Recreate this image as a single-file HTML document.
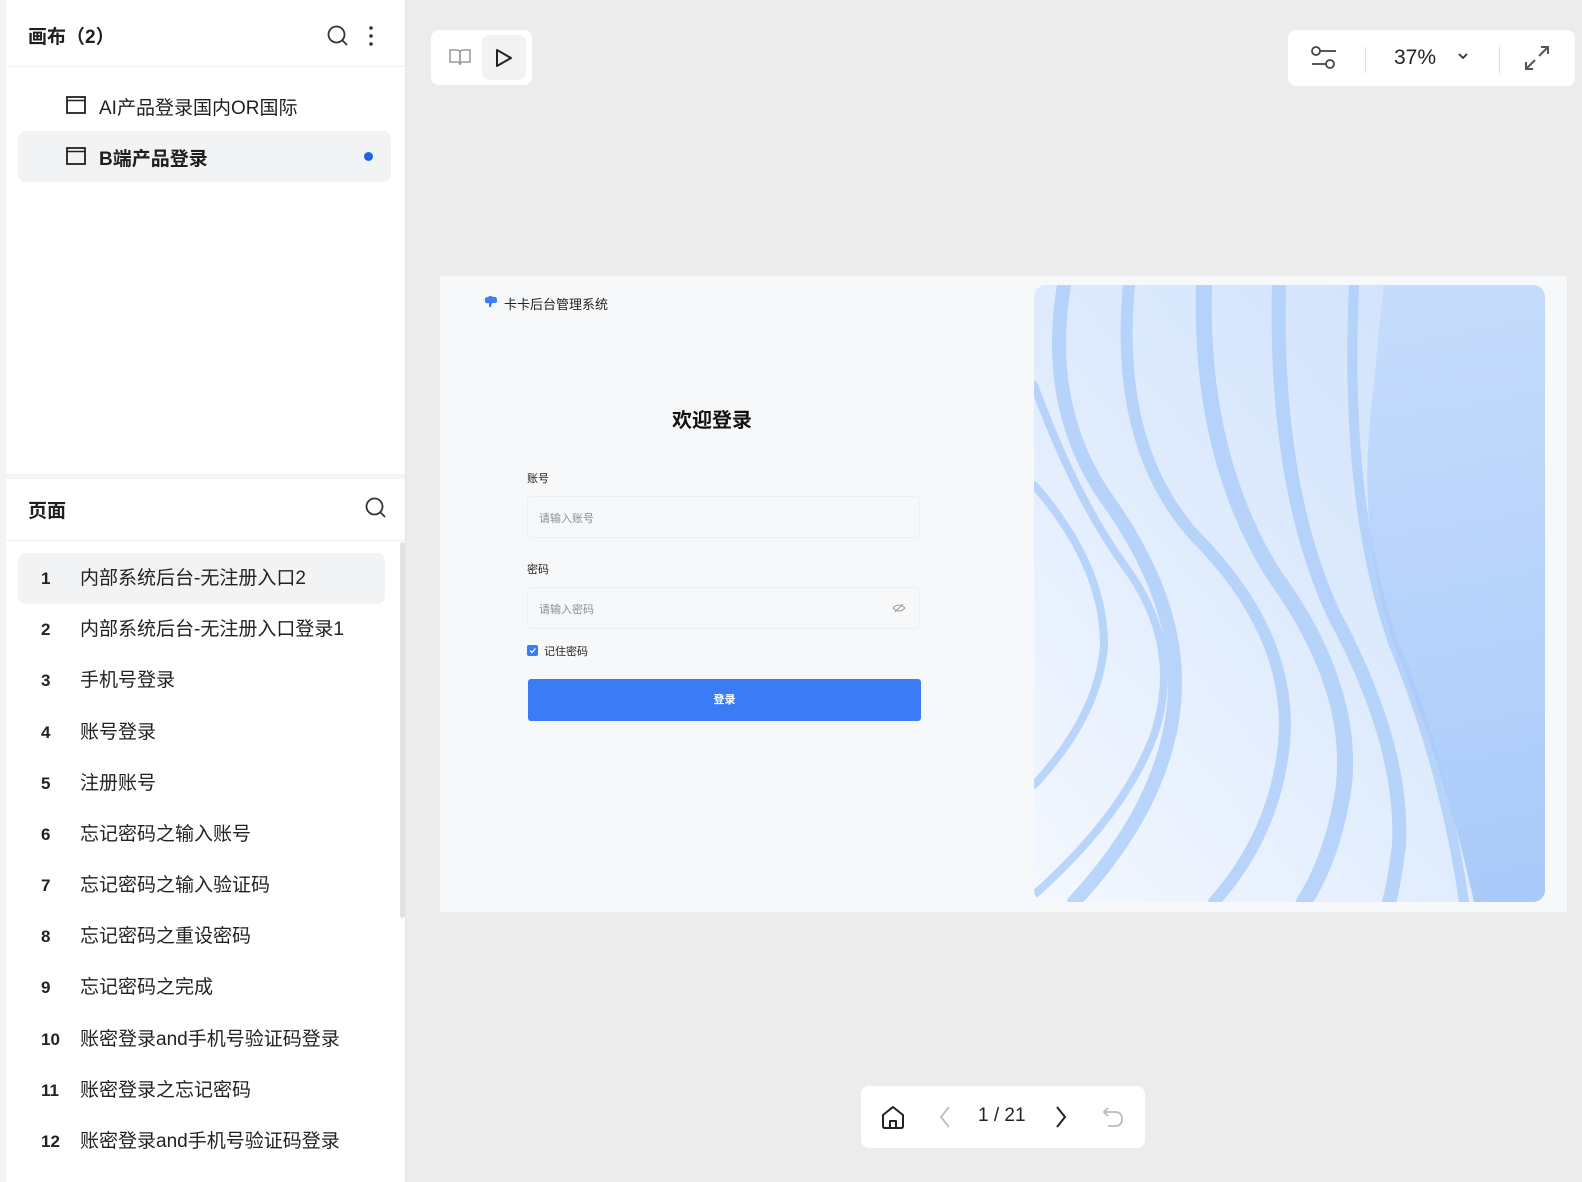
<!DOCTYPE html>
<html><head><meta charset="utf-8">
<style>
*{box-sizing:border-box;margin:0;padding:0}
body{width:1582px;height:1182px;overflow:hidden;background:#ececec;font-family:"Liberation Sans","Noto Sans CJK SC",sans-serif;color:#1f1f1f;position:relative}
.abs{position:absolute}
.side{left:0;top:0;width:406px;height:1182px;background:#fff;border-left:6px solid #f3f3f3;border-right:1px solid #e4e4e4}
.t18{font-size:19px}
.row{position:absolute;left:41px;height:51px;line-height:51px;font-size:19px;color:#222}
.row b{display:inline-block;width:39px;font-weight:bold;font-size:17px}
.card{background:#fff;border-radius:8px}
</style></head><body>
<div class="abs side">
  <div class="abs" style="left:22px;top:22px;font-size:19px;font-weight:bold">画布（2）</div>
  <svg class="abs" style="left:320px;top:24px" width="24" height="24" viewBox="0 0 24 24" fill="none" stroke="#333" stroke-width="1.8"><circle cx="10.5" cy="10.5" r="8"/><path d="M16.5 16.5L21 21"/></svg>
  <svg class="abs" style="left:360px;top:24px" width="10" height="24"><circle cx="5" cy="4" r="1.8" fill="#333"/><circle cx="5" cy="12" r="1.8" fill="#333"/><circle cx="5" cy="20" r="1.8" fill="#333"/></svg>
  <div class="abs" style="left:0;top:66px;width:399px;height:1px;background:#efefef"></div>
  <svg class="abs" style="left:60px;top:96px" width="20" height="18"><rect x="1" y="1" width="18" height="16" fill="none" stroke="#222" stroke-width="1.8"/><path d="M1 4.5H19" stroke="#222" stroke-width="1.6"/></svg>
  <div class="abs t18" style="left:93px;top:93px">AI产品登录国内OR国际</div>
  <div class="abs" style="left:12px;top:131px;width:373px;height:51px;background:#f2f3f5;border-radius:8px"></div>
  <svg class="abs" style="left:60px;top:147px" width="20" height="18"><rect x="1" y="1" width="18" height="16" fill="none" stroke="#222" stroke-width="1.8"/><path d="M1 4.5H19" stroke="#222" stroke-width="1.6"/></svg>
  <div class="abs t18" style="left:93px;top:144px;font-weight:bold">B端产品登录</div>
  <div class="abs" style="left:358px;top:152px;width:9px;height:9px;border-radius:50%;background:#1d63e8"></div>
  <div class="abs" style="left:0;top:474px;width:399px;height:5px;background:#f5f5f5"></div>
  <div class="abs" style="left:22px;top:496px;font-size:19px;font-weight:bold">页面</div>
  <svg class="abs" style="left:358px;top:496px" width="24" height="24" viewBox="0 0 24 24" fill="none" stroke="#333" stroke-width="1.8"><circle cx="10.5" cy="10.5" r="8"/><path d="M16.5 16.5L21 21"/></svg>
  <div class="abs" style="left:0;top:540px;width:399px;height:1px;background:#efefef"></div>
  <div class="abs" style="left:394px;top:542px;width:5px;height:376px;background:#e2e2e2;border-radius:3px"></div>
  <div class="abs" style="left:12px;top:553px;width:367px;height:51px;background:#f2f3f5;border-radius:8px"></div>
  <div class="row" style="left:35px;top:553px"><b>1</b>内部系统后台-无注册入口2</div>
  <div class="row" style="left:35px;top:604px"><b>2</b>内部系统后台-无注册入口登录1</div>
  <div class="row" style="left:35px;top:655px"><b>3</b>手机号登录</div>
  <div class="row" style="left:35px;top:707px"><b>4</b>账号登录</div>
  <div class="row" style="left:35px;top:758px"><b>5</b>注册账号</div>
  <div class="row" style="left:35px;top:809px"><b>6</b>忘记密码之输入账号</div>
  <div class="row" style="left:35px;top:860px"><b>7</b>忘记密码之输入验证码</div>
  <div class="row" style="left:35px;top:911px"><b>8</b>忘记密码之重设密码</div>
  <div class="row" style="left:35px;top:962px"><b>9</b>忘记密码之完成</div>
  <div class="row" style="left:35px;top:1014px"><b>10</b>账密登录and手机号验证码登录</div>
  <div class="row" style="left:35px;top:1065px"><b>11</b>账密登录之忘记密码</div>
  <div class="row" style="left:35px;top:1116px"><b>12</b>账密登录and手机号验证码登录</div>
</div>

<div class="abs card" style="left:431px;top:30px;width:101px;height:55px"></div>
<svg class="abs" style="left:449px;top:48px" width="22" height="18" viewBox="0 0 22 18" fill="none" stroke="#999" stroke-width="1.5"><path d="M1 2H8Q11 2 11 5V17Q11 14 8 14H1Z"/><path d="M21 2H14Q11 2 11 5V17Q11 14 14 14H21Z"/></svg>
<div class="abs" style="left:482px;top:35px;width:44px;height:45px;background:#f2f2f2;border-radius:7px"></div>
<svg class="abs" style="left:494px;top:47px" width="20" height="22" viewBox="0 0 20 22" fill="none" stroke="#222" stroke-width="2" stroke-linejoin="round"><path d="M3 3L17 11L3 19Z"/></svg>

<div class="abs card" style="left:1288px;top:30px;width:287px;height:56px"></div>
<svg class="abs" style="left:1310px;top:43px" width="28" height="30" viewBox="0 0 28 30" fill="none" stroke="#444" stroke-width="1.8"><circle cx="6" cy="8" r="4"/><path d="M10 8H26"/><circle cx="20" cy="21" r="4"/><path d="M2 21H16"/></svg>
<div class="abs" style="left:1365px;top:47px;width:1px;height:26px;background:#ddd"></div>
<div class="abs" style="left:1394px;top:46px;font-size:21px;color:#222">37%</div>
<svg class="abs" style="left:1457px;top:52px" width="12" height="8"><path d="M2 2L6 6L10 2" fill="none" stroke="#333" stroke-width="1.8"/></svg>
<div class="abs" style="left:1499px;top:47px;width:1px;height:26px;background:#ddd"></div>
<svg class="abs" style="left:1523px;top:44px" width="28" height="28" viewBox="0 0 28 28" fill="none" stroke="#555" stroke-width="2"><path d="M16 12L25 3M18 3H25V10"/><path d="M12 16L3 25M3 18V25H10"/></svg>

<div class="abs" style="left:440px;top:276px;width:1127px;height:636px;background:#f7f8fa"></div>
<svg class="abs" style="left:483px;top:295px" width="16" height="14" viewBox="0 0 16 14"><path d="M2 6Q1 2 5 2Q7 0 10 2Q14 1 14 5Q15 8 11 8L9 8L8 12L6 12L6 8Q2 9 2 6Z" fill="#3d7ef0"/></svg>
<div class="abs" style="left:504px;top:294px;font-size:13px;color:#222">卡卡后台管理系统</div>
<div class="abs" style="left:662px;top:404px;width:100px;text-align:center;font-size:20px;font-weight:bold;color:#111">欢迎登录</div>
<div class="abs" style="left:527px;top:470px;font-size:11px;color:#222">账号</div>
<div class="abs" style="left:527px;top:496px;width:393px;height:42px;background:#f7f8fa;border:1px solid #eeeff2;border-radius:4px"></div>
<div class="abs" style="left:539px;top:510px;font-size:11px;color:#8a8f99">请输入账号</div>
<div class="abs" style="left:527px;top:561px;font-size:11px;color:#222">密码</div>
<div class="abs" style="left:527px;top:587px;width:393px;height:42px;background:#f7f8fa;border:1px solid #eeeff2;border-radius:4px"></div>
<div class="abs" style="left:539px;top:601px;font-size:11px;color:#8a8f99">请输入密码</div>
<svg class="abs" style="left:892px;top:603px" width="14" height="10" viewBox="0 0 14 10" fill="none" stroke="#999" stroke-width="1"><path d="M1 5Q7 -1 13 5Q7 11 1 5Z"/><path d="M3 9L11 1"/></svg>
<div class="abs" style="left:527px;top:645px;width:11px;height:11px;border-radius:2px;background:#3b7cf6"></div>
<svg class="abs" style="left:528px;top:646px" width="9" height="9"><path d="M2 4.5L4 6.5L7.5 2.5" fill="none" stroke="#fff" stroke-width="1.2"/></svg>
<div class="abs" style="left:544px;top:643px;font-size:11px;color:#222">记住密码</div>
<div class="abs" style="left:528px;top:679px;width:393px;height:42px;background:#3b7cf6;border-radius:3px;color:#fff;font-size:11px;font-weight:bold;text-align:center;line-height:42px">登录</div>

<svg class="abs" style="left:1034px;top:285px" width="511" height="617" viewBox="0 0 511 617">
<defs>
<clipPath id="c"><rect width="511" height="617" rx="12"/></clipPath>
<linearGradient id="g" x1="0" y1="1" x2="1" y2="0"><stop offset="0" stop-color="#f4f8ff"/><stop offset="0.45" stop-color="#e0ecfd"/><stop offset="1" stop-color="#cde0fc"/></linearGradient>
<linearGradient id="r" x1="0" y1="0" x2="0" y2="1"><stop offset="0" stop-color="#c2dafc"/><stop offset="1" stop-color="#97bff8"/></linearGradient>
</defs>
<g clip-path="url(#c)">
<rect width="511" height="617" fill="url(#g)"/>
<path d="M380 0H511V617H440Q410 480 360 360Q320 240 340 100Q345 40 350 0Z" fill="url(#r)" opacity="0.75"/>
<g fill="none" stroke="#a9cbfa" stroke-linecap="round" opacity="0.75">
<path d="M30 0Q10 120 70 210Q150 320 140 420Q130 520 40 617" stroke-width="14"/>
<path d="M95 0Q80 160 160 250Q260 350 250 460Q240 550 180 617" stroke-width="12"/>
<path d="M170 0Q165 170 240 290Q320 400 310 500Q300 570 270 617" stroke-width="16"/>
<path d="M245 0Q240 200 300 330Q370 460 365 560Q360 600 355 617" stroke-width="14"/>
<path d="M320 0Q310 220 360 360Q410 480 430 617" stroke-width="10"/>
<path d="M0 100Q40 210 90 280Q150 360 120 450Q90 530 0 610" stroke-width="8"/>
<path d="M0 200Q70 280 70 360Q65 430 0 500" stroke-width="8"/>
</g>
</g>
</svg>

<div class="abs card" style="left:861px;top:1086px;width:284px;height:62px"></div>
<svg class="abs" style="left:880px;top:1104px" width="26" height="26" viewBox="0 0 26 26" fill="none" stroke="#222" stroke-width="2" stroke-linejoin="round"><path d="M3 11L13 3L23 11V22Q23 24 21 24H5Q3 24 3 22Z"/><path d="M10 24V17H16V24"/></svg>
<svg class="abs" style="left:938px;top:1105px" width="14" height="24"><path d="M11 2L3 12L11 22" fill="none" stroke="#bbb" stroke-width="1.8"/></svg>
<div class="abs" style="left:978px;top:1105px;font-size:19px;color:#222">1 / 21</div>
<svg class="abs" style="left:1054px;top:1105px" width="14" height="24"><path d="M3 2L11 12L3 22" fill="none" stroke="#222" stroke-width="2"/></svg>
<svg class="abs" style="left:1101px;top:1105px" width="24" height="24" viewBox="0 0 24 24" fill="none" stroke="#bbb" stroke-width="1.8"><path d="M7 3L3 7L7 11"/><path d="M3 7H14Q21 7 21 14Q21 21 14 21H7"/></svg>
</body></html>
